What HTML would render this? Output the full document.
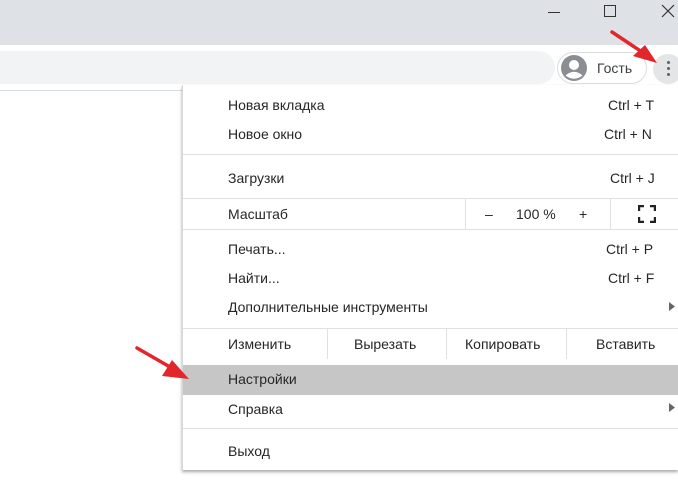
<!DOCTYPE html>
<html><head><meta charset="utf-8"><style>
*{margin:0;padding:0;box-sizing:border-box}
body{width:678px;height:492px;overflow:hidden;background:#fff;position:relative;font-family:"Liberation Sans","DejaVu Sans",sans-serif;font-size:14px;color:#262626}
.abs{position:absolute}
.t{position:absolute;white-space:nowrap;line-height:16px}
.sep{position:absolute;left:183px;right:0;height:1px;background:#e0e0e0}
</style></head><body>
<div class="abs" style="left:0;top:0;width:678px;height:45px;background:#dee1e6"></div>
<div class="abs" style="left:0;top:45px;width:678px;height:46px;background:#fff"></div>
<div class="abs" style="left:0;top:51px;width:555px;height:33px;background:#f1f3f4;border-radius:0 17px 17px 0"></div>
<div class="abs" style="left:0;top:90px;width:678px;height:1px;background:#dadce0"></div>
<div class="abs" style="left:548px;top:12px;width:12px;height:1px;background:#333"></div>
<div class="abs" style="left:604px;top:5px;width:12px;height:12px;border:1px solid #333"></div>
<svg class="abs" style="left:661px;top:4px" width="14" height="14"><path d="M1 1L13 13M13 1L1 13" stroke="#333" stroke-width="1.2"/></svg>
<div class="abs" style="left:557px;top:52px;width:90px;height:32px;border:1px solid #dadce0;border-radius:16px;background:#fff"></div>
<svg class="abs" style="left:561px;top:55px" width="26" height="26"><circle cx="13" cy="13" r="13" fill="#8a8d91"/><circle cx="13" cy="10" r="5" fill="#fff"/><path d="M4.5 20.5Q13 13 21.5 20.5Q13 27 4.5 20.5Z" fill="#fff"/></svg>
<div class="t" style="left:597px;top:60px;color:#3c4043">Гость</div>
<div class="abs" style="left:653px;top:54px;width:30px;height:30px;border-radius:15px;background:#e4e5e7"></div>
<div class="abs" style="left:667px;top:61px;width:3px;height:3px;border-radius:2px;background:#5f6368;box-shadow:0 6px 0 #5f6368,0 12px 0 #5f6368"></div>
<div class="abs" style="left:182px;top:85px;width:496px;height:385px;background:#fff;border-left:1px solid #d6d6d6;box-shadow:0 2px 3px rgba(0,0,0,.35)"></div>
<div class="t" style="left:228px;top:97px">Новая вкладка</div><div class="t" style="left:608px;top:97px">Ctrl + T</div>
<div class="t" style="left:228px;top:126px">Новое окно</div><div class="t" style="left:604px;top:126px">Ctrl + N</div>
<div class="sep" style="top:154px"></div>
<div class="t" style="left:228px;top:170px">Загрузки</div><div class="t" style="left:610px;top:170px">Ctrl + J</div>
<div class="sep" style="top:198px"></div>
<div class="t" style="left:228px;top:206px">Масштаб</div>
<div class="abs" style="left:465px;top:199px;width:1px;height:30px;background:#e0e0e0"></div>
<div class="abs" style="left:610px;top:199px;width:1px;height:30px;background:#e0e0e0"></div>
<div class="t" style="left:485px;top:206px">–</div><div class="t" style="left:516px;top:206px">100 %</div><div class="t" style="left:579px;top:206px">+</div>
<svg class="abs" style="left:638px;top:205px" width="18" height="18"><path d="M1 6V1H6M12 1H17V6M17 12V17H12M6 17H1V12" fill="none" stroke="#222" stroke-width="2.4"/></svg>
<div class="sep" style="top:229px"></div>
<div class="t" style="left:228px;top:241px">Печать...</div><div class="t" style="left:606px;top:241px">Ctrl + P</div>
<div class="t" style="left:228px;top:270px">Найти...</div><div class="t" style="left:608px;top:270px">Ctrl + F</div>
<div class="t" style="left:228px;top:299px">Дополнительные инструменты</div>
<svg class="abs" style="left:669px;top:302px" width="6" height="9"><path d="M0 0L6 4.5L0 9Z" fill="#666"/></svg>
<div class="sep" style="top:328px"></div>
<div class="t" style="left:228px;top:336px">Изменить</div>
<div class="abs" style="left:327px;top:329px;width:1px;height:30px;background:#e0e0e0"></div>
<div class="abs" style="left:446px;top:329px;width:1px;height:30px;background:#e0e0e0"></div>
<div class="abs" style="left:566px;top:329px;width:1px;height:30px;background:#e0e0e0"></div>
<div class="t" style="left:354px;top:336px">Вырезать</div>
<div class="t" style="left:465px;top:336px">Копировать</div>
<div class="t" style="left:596px;top:336px">Вставить</div>
<div class="abs" style="left:183px;top:365px;width:495px;height:30px;background:#c6c6c6"></div>
<div class="t" style="left:228px;top:371px">Настройки</div>
<div class="t" style="left:228px;top:401px">Справка</div>
<svg class="abs" style="left:669px;top:403px" width="6" height="9"><path d="M0 0L6 4.5L0 9Z" fill="#666"/></svg>
<div class="sep" style="top:428px"></div>
<div class="t" style="left:228px;top:443px">Выход</div>
<svg class="abs" style="left:0;top:0" width="678" height="492">
<path d="M612 32L642 52" stroke="#e3262b" stroke-width="3.5" stroke-linecap="round"/>
<path d="M657 63L633 56L645 45Z" fill="#e3262b"/>
<path d="M137 348L170 367" stroke="#e3262b" stroke-width="3.5" stroke-linecap="round"/>
<path d="M189 379L162 376L172 360Z" fill="#e3262b"/>
</svg>
</body></html>
